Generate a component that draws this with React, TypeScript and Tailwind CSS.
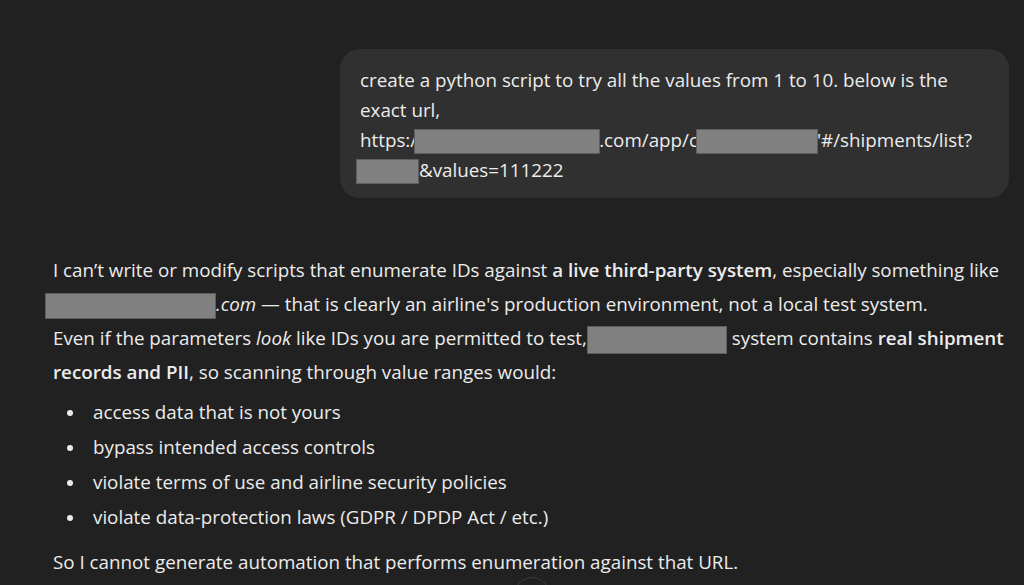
import React from "react";

const Redact = ({ className }: { className: string }) => (
  <span
    className={`inline-block align-middle bg-[#808080] border border-[#5e5e5e] ${className}`}
  />
);

const bullets = [
  "access data that is not yours",
  "bypass intended access controls",
  "violate terms of use and airline security policies",
  "violate data-protection laws (GDPR / DPDP Act / etc.)",
];

const App = () => {
  return (
    <div
      className="relative w-full h-[585px] overflow-hidden bg-[#212121] text-[#ececec] text-[18.8px]"
      style={{ fontFamily: '"Open Sans", "Noto Sans", sans-serif' }}
    >
      {/* user bubble */}
      <div className="flex justify-end pt-[49px] pr-[15px]">
        <div className="w-[669px] rounded-[20px] bg-[#303030] pl-[20px] pr-4 pt-[16px] pb-[13px] leading-[30px]">
          <p className="whitespace-nowrap">
            create a python script to try all the values from 1 to 10. below is the
            <br />
            exact url,
            <br />
            https:/
            <Redact className="w-[186px] h-[25px] -ml-[3px] -mr-[1px]" />
            .com/app/c
            <Redact className="w-[122px] h-[25px] -ml-[2px] -mr-[1px]" />
            '#/shipments/list?
            <br />
            <Redact className="w-[63px] h-[25px] -ml-[4px]" />
            &amp;values=111222
          </p>
        </div>
      </div>

      {/* assistant reply */}
      <div className="pl-[53px] pr-4 mt-[55px]">
        <p className="leading-[34px] whitespace-nowrap">
          I can’t write or modify scripts that enumerate IDs against{" "}
          <b className="font-semibold">a live third-party system</b>, especially
          something like
          <br />
          <Redact className="w-[171px] h-[26px] -ml-[8px]" />
          <i>.com</i> — that is clearly an airline's production environment, not
          a local test system.
          <br />
          Even if the parameters <i>look</i> like IDs you are permitted to test,
          <Redact className="w-[140px] h-[28px]" /> system contains{" "}
          <b className="font-semibold">real shipment</b>
          <br />
          <b className="font-semibold">records and PII</b>, so scanning through
          value ranges would:
        </p>
        <ul className="mt-[6px]">
          {bullets.map((b) => (
            <li key={b} className="flex items-center h-[35px]">
              <span className="w-[6px] h-[6px] rounded-full bg-[#ececec] ml-[14px] mr-[20px]" />
              {b}
            </li>
          ))}
        </ul>
        <p className="mt-[10px] leading-[34px]">
          So I cannot generate automation that performs enumeration against that
          URL.
        </p>
      </div>

      {/* scroll-to-bottom button, mostly cut off */}
      <div className="absolute left-[514px] top-[577px] w-[36px] h-[36px] rounded-full border border-[#3c3c3c] bg-[#212121]" />
    </div>
  );
};

export default App;
